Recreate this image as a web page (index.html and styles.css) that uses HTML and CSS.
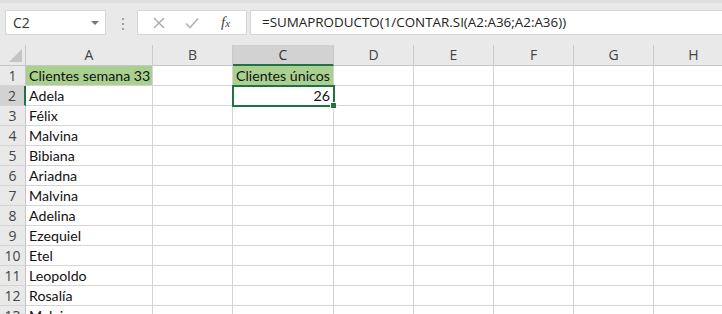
FILE: index.html
```html
<!DOCTYPE html>
<html lang="es">
  <head>
    <meta charset="UTF-8" />
    <title>Clientes únicos</title>
    <link rel="stylesheet" href="styles.css">
  </head>
  <body>
    <div class="toolbar">
      <div class="nameBox">
        <span>C2</span>
        <span class="arrow"></span>
      </div>
      <div class="dots"><i></i><i></i><i></i></div>
      <div class="fxBox">
        <svg class="ico" width="14" height="14" viewBox="0 0 14 14"><path d="M2 2 L12 12 M12 2 L2 12" stroke="#a8a8a8" stroke-width="1.4" fill="none"/></svg>
        <svg class="ico" width="16" height="14" viewBox="0 0 16 14"><path d="M2 7.5 L6 11.5 L14 2.5" stroke="#b4b4b4" stroke-width="1.6" fill="none"/></svg>
        <span class="fx">f<small>x</small></span>
      </div>
      <div class="formula">=SUMAPRODUCTO(1/CONTAR.SI(A2:A36;A2:A36))</div>
    </div>

    <div class="sheet">
      <div class="corner"><span></span></div>
      <div class="colHead">A</div>
      <div class="colHead">B</div>
      <div class="colHead active">C</div>
      <div class="colHead">D</div>
      <div class="colHead">E</div>
      <div class="colHead">F</div>
      <div class="colHead">G</div>
      <div class="colHead">H</div>
    </div>
    <div class="sheet rows"></div>

    <script>
      const names = ["Clientes semana 33", "Adela", "Félix", "Malvina", "Bibiana", "Ariadna", "Malvina", "Adelina", "Ezequiel", "Etel", "Leopoldo", "Rosalía", "Malvina"];
      const rows = document.querySelector(".rows");
      names.forEach((n, i) => {
        const r = i + 1;
        let html = `<div class="rowHead ${r == 2 ? "active" : ""}">${r}</div>`;
        html += `<div class="cell ${r == 1 ? "fill" : ""}">${n}</div>`;
        html += `<div class="cell"></div>`;
        if (r == 1) {
          html += `<div class="cell fill">Clientes únicos</div>`;
        } else if (r == 2) {
          html += `<div class="cell num selected">26<span class="handle"></span></div>`;
        } else {
          html += `<div class="cell"></div>`;
        }
        for (let c = 0; c < 5; c++) html += `<div class="cell"></div>`;
        rows.innerHTML += html;
      });
    </script>
  </body>
</html>
```

FILE: styles.css
```css
body {
  margin: 0;
  background: #fff;
  font-family: "Open Sans", sans-serif;
  overflow: hidden;
}
.toolbar {
  display: flex;
  align-items: flex-start;
  height: 45px;
  box-sizing: border-box;
  background: #e9e9e9;
  border-top: 3px solid #dedede;
  padding-top: 7px;
}
.nameBox {
  display: flex;
  align-items: center;
  justify-content: space-between;
  margin-left: 5px;
  width: 101px;
  height: 25px;
  box-sizing: border-box;
  padding: 0 6px 0 7px;
  background: #fff;
  border: 1px solid #d6d6d6;
  font-size: 14px;
  color: #333;
}
.arrow {
  width: 0;
  height: 0;
  border-left: 4px solid transparent;
  border-right: 4px solid transparent;
  border-top: 4px solid #777;
}
.dots {
  display: flex;
  flex-direction: column;
  gap: 3px;
  margin: 8px 0 0 16px;
}
.dots i {
  width: 2px;
  height: 2px;
  background: #a0a0a0;
}
.fxBox {
  display: flex;
  align-items: center;
  margin-left: 13px;
  width: 110px;
  height: 25px;
  box-sizing: border-box;
  background: #fff;
  border: 1px solid #d6d6d6;
  padding-left: 14px;
  gap: 18px;
}
.fx {
  font-family: "Liberation Serif", serif;
  font-style: italic;
  font-size: 15px;
  color: #444;
  margin-left: 3px;
}
.fx small {
  font-size: 11px;
}
.formula {
  flex: 1;
  margin-left: 3px;
  height: 25px;
  box-sizing: border-box;
  background: #fff;
  border: 1px solid #d6d6d6;
  border-right: none;
  padding-left: 11px;
  font-size: 13.4px;
  line-height: 23px;
  color: #222;
}
.sheet {
  display: grid;
  grid-template-columns: 26px 127px 80px 101px 80px 80px 80px 80px 80px;
  font-family: "Lato", sans-serif;
}
.corner,
.colHead {
  height: 20px;
  background: #e9e9e9;
  border-bottom: 1px solid #c6c6c6;
  border-right: 1px solid #c9c9c9;
  font-family: "Open Sans", sans-serif;
  font-size: 14px;
  line-height: 20px;
  text-align: center;
  color: #444;
}
.corner {
  position: relative;
}
.corner span {
  position: absolute;
  right: 3px;
  bottom: 3px;
  width: 0;
  height: 0;
  border-left: 13px solid transparent;
  border-bottom: 13px solid #c4c4c4;
}
.colHead.active {
  background: #d2d2d2;
  border-bottom: 2px solid #217346;
  height: 19px;
  color: #333;
}
.rowHead {
  height: 19px;
  background: #e9e9e9;
  border-right: 1px solid #c6c6c6;
  border-bottom: 1px solid #d4d4d4;
  font-family: "Open Sans", sans-serif;
  font-size: 14px;
  line-height: 20px;
  text-align: center;
  color: #444;
}
.rowHead.active {
  background: #d2d2d2;
  border-right: 2px solid #217346;
}
.cell {
  position: relative;
  height: 19px;
  border-right: 1px solid #d4d4d4;
  border-bottom: 1px solid #d4d4d4;
  padding: 0 3px;
  font-size: 14.2px;
  line-height: 20px;
  color: #111;
  white-space: nowrap;
}
.fill {
  background: #a9d08e;
}
.num {
  text-align: right;
}
.selected {
  z-index: 2;
  outline: 2px solid #217346;
  outline-offset: -1px;
}
.handle {
  position: absolute;
  right: -4px;
  bottom: -4px;
  width: 5px;
  height: 5px;
  background: #217346;
  border: 1px solid #fff;
}
```
